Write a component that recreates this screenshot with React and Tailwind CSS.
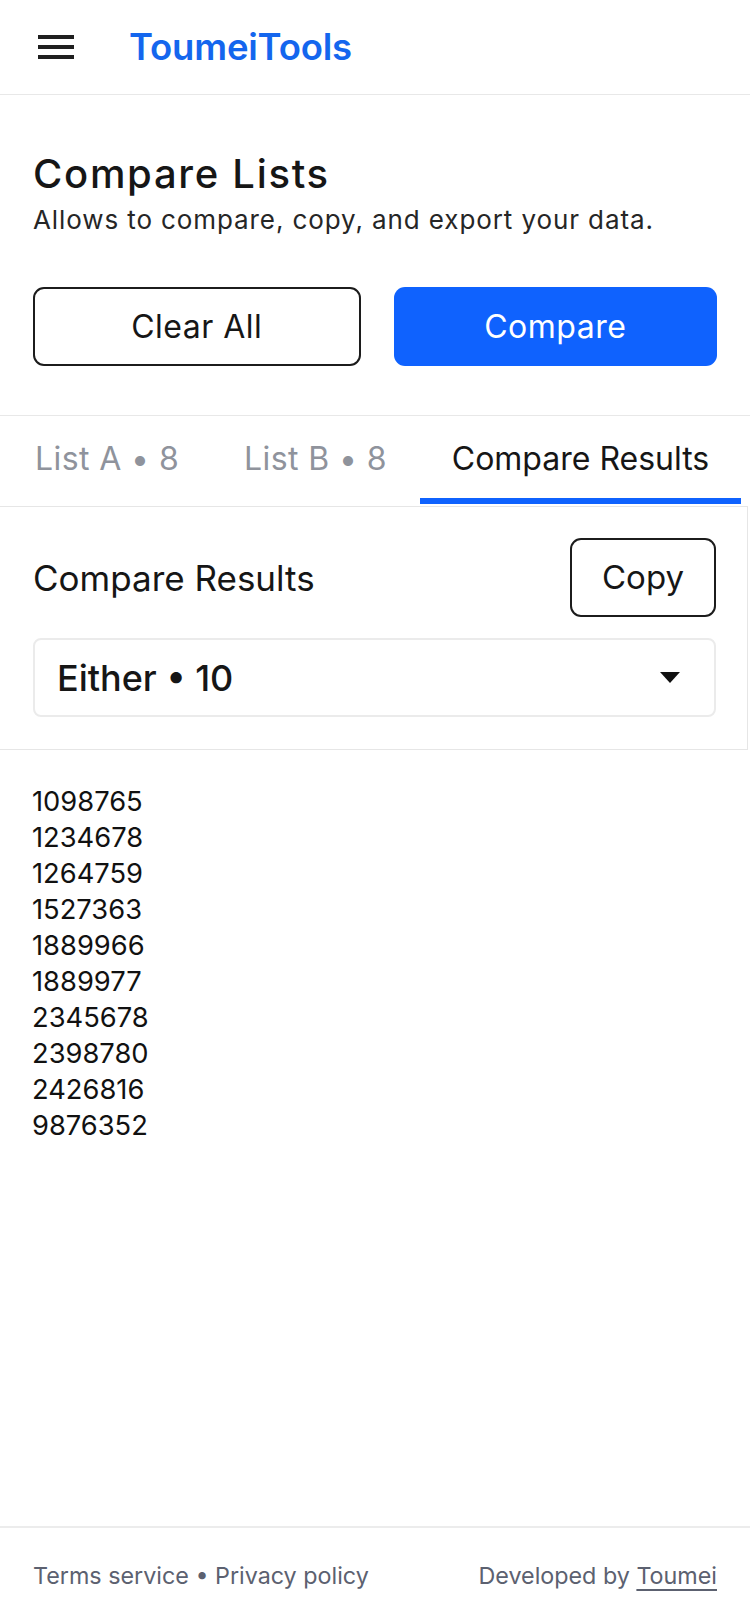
import React from "react";

const numbers = [
  "1098765",
  "1234678",
  "1264759",
  "1527363",
  "1889966",
  "1889977",
  "2345678",
  "2398780",
  "2426816",
  "9876352",
];

function MenuIcon() {
  return (
    <div className="flex w-[36px] flex-col gap-[6px]">
      <span className="block h-[4px] w-full bg-[#1f1f1f]" />
      <span className="block h-[4px] w-full bg-[#1f1f1f]" />
      <span className="block h-[4px] w-full bg-[#1f1f1f]" />
    </div>
  );
}

function Caret() {
  return (
    <svg width="20" height="11" viewBox="0 0 20 11" aria-hidden="true">
      <path d="M0 0 H20 L10 11 Z" fill="#111111" />
    </svg>
  );
}

export default function App() {
  return (
    <div
      className="flex min-h-[1624px] w-[750px] flex-col bg-white text-[#161616]"
      style={{ fontFamily: "Inter, 'Noto Sans', sans-serif" }}
    >
      <header className="flex h-[95px] items-center border-b border-[#e8e8e8] bg-white pl-[38px]">
        <MenuIcon />
        <span className="ml-[55px] text-[36.5px] leading-[44px] font-semibold tracking-[-0.2px] text-[#1466ee]">
          ToumeiTools
        </span>
      </header>

      <main className="flex flex-1 flex-col">
        <section className="border-b border-[#e8e8e8] bg-white px-[33px] pt-[57px] pb-[49px]">
          <h1 className="text-[40px] leading-[44px] font-medium tracking-[1.7px]">Compare Lists</h1>
          <p className="mt-[8px] text-[26px] leading-[32px] tracking-[0.9px] text-[#262626]">
            Allows to compare, copy, and export your data.
          </p>
          <div className="mt-[51px] flex gap-[33px]">
            <button className="h-[79px] flex-1 rounded-[11px] border-2 border-[#1c1c1c] bg-white text-[32px] tracking-[0.5px] text-[#161616]">
              Clear All
            </button>
            <button className="h-[79px] flex-1 rounded-[11px] bg-[#0f62fe] text-[32px] tracking-[0.5px] text-white">
              Compare
            </button>
          </div>
        </section>

        <nav className="flex h-[88px] bg-white text-[32px] leading-[40px]">
          <div className="flex w-[211px] items-center border-b-[6px] border-transparent pt-[4px] pl-[35px] tracking-[0.4px] text-[#8f939c]">
            List A • 8
          </div>
          <div className="flex w-[209px] items-center border-b-[6px] border-transparent pt-[4px] pl-[33px] tracking-[0.4px] text-[#8f939c]">
            List B • 8
          </div>
          <div className="flex w-[321px] items-center justify-center border-b-[6px] border-[#0f62fe] pt-[4px] text-[#161616]">
            Compare Results
          </div>
        </nav>

        <div className="mt-[2px] w-[748px] border-y border-r border-[#e6e6e6] bg-white pt-[31px] pr-[31px] pb-[32px] pl-[33px]">
          <div className="flex items-center justify-between">
            <span className="text-[35px] leading-[44px]">Compare Results</span>
            <button className="h-[79px] w-[146px] rounded-[11px] border-2 border-[#1c1c1c] bg-white text-[33px]">
              Copy
            </button>
          </div>
          <div className="mt-[21px] flex h-[79px] items-center justify-between rounded-[8px] border-2 border-[#ebebeb] bg-white pr-[34px] pl-[22px]">
            <span className="text-[36px] leading-[44px] font-medium">Either • 10</span>
            <Caret />
          </div>
        </div>

        <ul className="px-[32px] pt-[34px] text-[27.3px] leading-[36px] text-[#111111]">
          {numbers.map((n) => (
            <li key={n}>{n}</li>
          ))}
        </ul>
      </main>

      <footer className="flex h-[98px] items-center justify-between border-t-2 border-[#ececec] bg-white px-[33px] text-[23.3px] leading-[32px] text-[#5c6170]">
        <span>Terms service • Privacy policy</span>
        <span>
          Developed by <span className="underline underline-offset-[5px]">Toumei</span>
        </span>
      </footer>
    </div>
  );
}
